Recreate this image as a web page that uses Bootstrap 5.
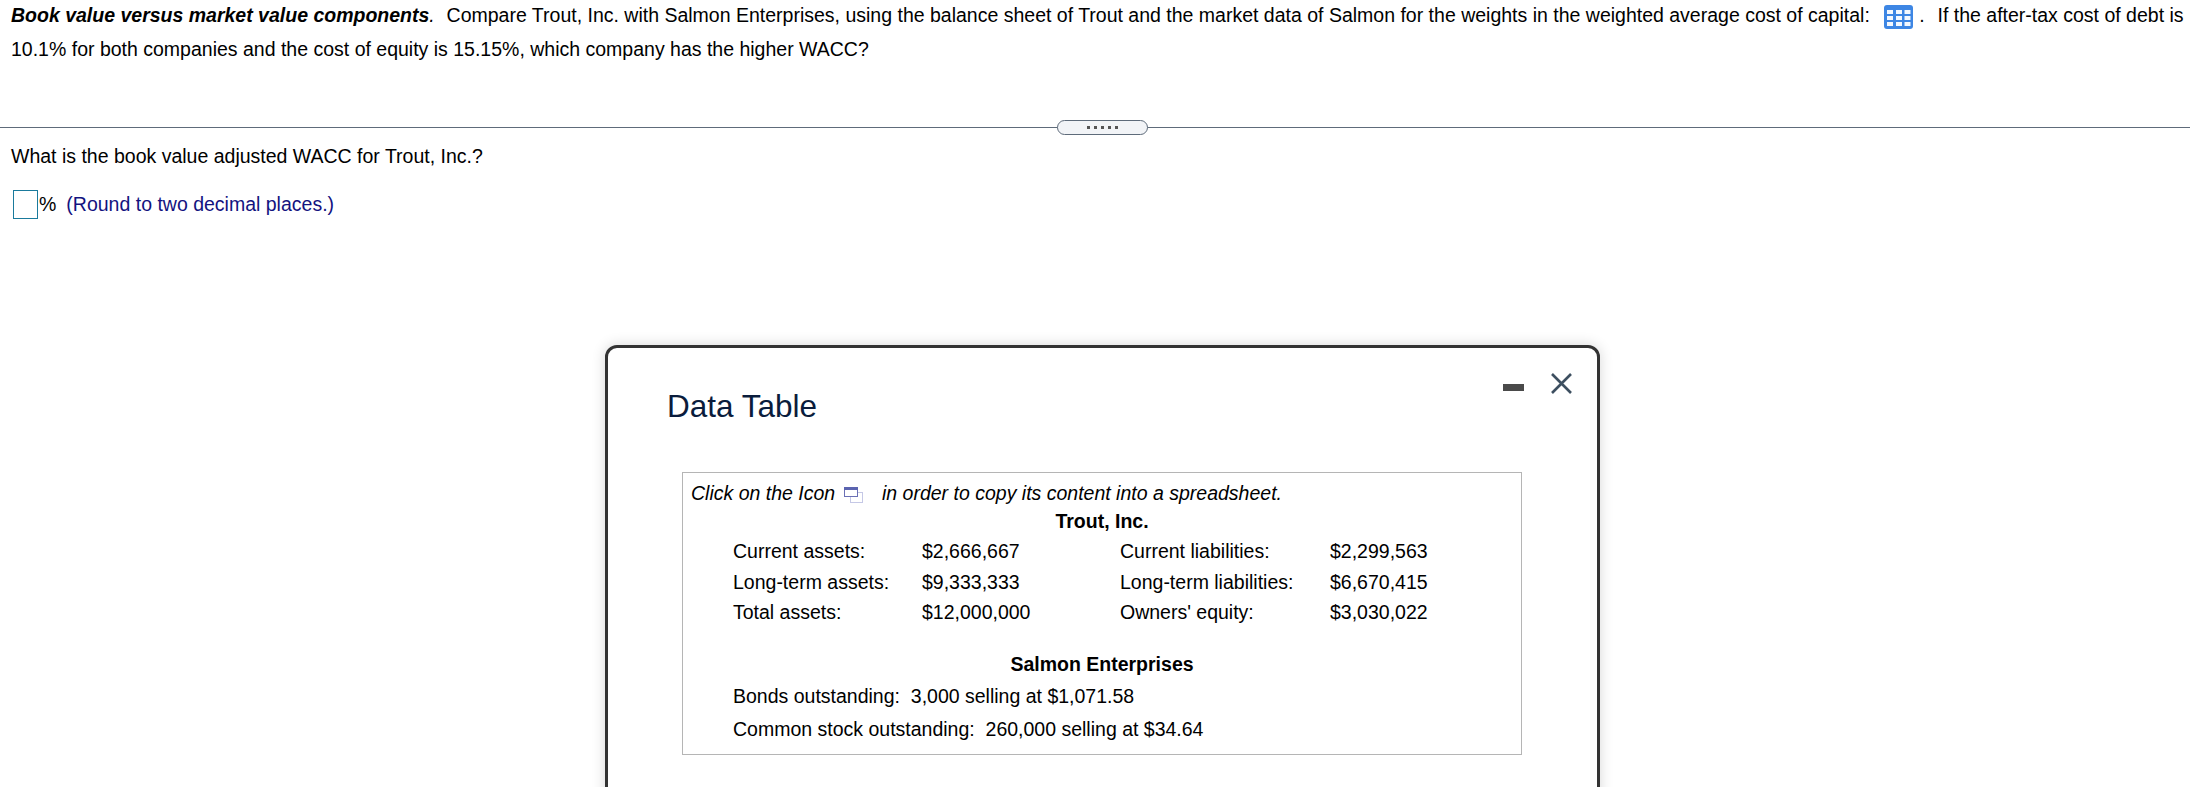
<!DOCTYPE html>
<html lang="en">

<head>
    <meta charset="UTF-8" />
    <title>Data Table</title>
    <link href="https://cdn.jsdelivr.net/npm/bootstrap@5.3.3/dist/css/bootstrap.min.css" rel="stylesheet" />
    <style>
        body {
            width: 2190px;
            height: 787px;
            overflow: hidden;
            position: relative;
            background: #fff;
            color: #000;
            font-family: "Liberation Sans", Arial, sans-serif;
            font-size: 19.5px;
            line-height: 33px;
        }

        .intro-text {
            padding: 0 11px;
            height: 127px;
            margin: -2px 0 0;
            line-height: 34px;
            white-space: nowrap;
        }

        .lead-gap {
            margin-left: 1px;
        }

        .table-icon {
            vertical-align: -7px;
            margin: 0 6px 0 9px;
        }

        .tail-gap {
            margin-left: 2px;
        }

        .split-line {
            height: 1px;
            background: #5e6b7a;
            position: relative;
            margin-top: 2px;
        }

        .split-handle {
            position: absolute;
            left: 1057px;
            top: -7px;
            width: 91px;
            height: 15px;
            background: #f2f4f7;
            border: 1px solid #5e6b7a;
            border-radius: 8px;
            gap: 4px;
        }

        .split-handle i {
            width: 3px;
            height: 3px;
            background: #555;
        }

        .answer-area {
            padding: 12px 11px 0;
        }

        .answer-box {
            width: 25px;
            height: 29px;
            border: 1px solid #1a7a9c;
            margin: 0 1px 0 2px;
        }

        .hint-text {
            color: #13137f;
            margin-left: 10px;
        }

        .answer-row {
            margin-top: 15px;
        }

        .data-window {
            position: absolute;
            left: 605px;
            top: 345px;
            width: 995px;
            height: 480px;
            background: #fff;
            border: 3px solid #333;
            border-radius: 12px;
            box-shadow: 0 0 14px rgba(0, 0, 0, .16);
            padding: 38px 59px 0 59px;
        }

        .window-title {
            font-size: 31.5px;
            line-height: 40px;
            color: #0a1c3c;
            margin: 0 0 46px;
            font-weight: 400;
        }

        .window-btns {
            position: absolute;
            top: 25px;
            right: 25px;
            gap: 27px;
        }

        .min-btn {
            width: 21px;
            height: 7px;
            background: #4a4a4a;
            margin-top: 11px;
        }

        .data-box {
            width: 840px;
            height: 283px;
            margin-left: 15px;
            border: 1px solid #b5b5b5;
            padding: 6px 8px 0;
        }

        .copy-line {
            font-style: italic;
            height: 28px;
            line-height: 28px;
        }

        .copy-icon {
            vertical-align: -3px;
            margin: 0 14px 0 3px;
        }

        .box-heading {
            font-weight: 700;
            text-align: center;
            line-height: 28px;
        }

        .trout-grid {
            margin: 1px 0 0 42px;
        }

        .trout-grid>div {
            height: 30.5px;
            line-height: 30px;
        }

        .cell-a { width: 189px; }
        .cell-b { width: 198px; }
        .cell-c { width: 210px; }

        .salmon-head {
            margin-top: 21px;
            line-height: 30px;
        }

        .salmon-row {
            margin-left: 42px;
            height: 33px;
            line-height: 33px;
        }

        .salmon-first {
            margin-top: 1px;
        }
    </style>
</head>

<body>
    <p class="intro-text"><span class="fw-bold fst-italic">Book value versus market value components</span><i>.</i>&nbsp; <span class="lead-gap">Compare</span> Trout, Inc. with Salmon Enterprises, using the balance sheet of Trout and the market data of Salmon for the weights in the weighted average cost of capital: <svg class="table-icon" width="29" height="24" viewBox="0 0 29 24"><rect width="29" height="24" rx="3" fill="#3d86e4" /><g fill="#f4f8fe"><rect x="3" y="5" width="6" height="4" /><rect x="12" y="5" width="6" height="4" /><rect x="20.5" y="5" width="6" height="4" /><rect x="3" y="11" width="6" height="4" /><rect x="12" y="11" width="6" height="4" /><rect x="20.5" y="11" width="6" height="4" /><rect x="3" y="17" width="6" height="4" /><rect x="12" y="17" width="6" height="4" /><rect x="20.5" y="17" width="6" height="4" /></g></svg>.&nbsp; <span class="tail-gap">If</span> the after-tax cost of debt is<br>10.1% for both companies and the cost of equity is 15.15%, which company has the higher WACC?</p>

    <div class="split-line">
        <div class="split-handle d-flex align-items-center justify-content-center"><i></i><i></i><i></i><i></i><i></i></div>
    </div>

    <div class="answer-area">
        <div>What is the book value adjusted WACC for Trout, Inc.?</div>
        <div class="answer-row d-flex align-items-center">
            <span class="answer-box"></span><span>%</span><span class="hint-text">(Round to two decimal places.)</span>
        </div>
    </div>

    <div class="data-window">
        <div class="window-btns d-flex">
            <span class="min-btn"></span>
            <svg width="21" height="21" viewBox="0 0 21 21"><path d="M1 1 20 20M20 1 1 20" stroke="#3d4f60" stroke-width="2.6" fill="none" /></svg>
        </div>
        <h2 class="window-title">Data Table</h2>
        <div class="data-box">
            <div class="copy-line">Click on the Icon <svg class="copy-icon" width="19" height="16" viewBox="0 0 19 16"><rect x="6.5" y="5.5" width="12" height="10" fill="#fff" stroke="#c5c8e6" /><rect x=".5" y=".5" width="13" height="9" fill="#fff" stroke="#6b70b5" /><rect x="0" y="0" width="14" height="3" fill="#5b64b0" /></svg> in order to copy its content into a spreadsheet.</div>
            <div class="box-heading">Trout, Inc.</div>
            <div class="trout-grid">
                <div class="d-flex"><span class="cell-a">Current assets:</span><span class="cell-b">$2,666,667</span><span class="cell-c">Current liabilities:</span><span>$2,299,563</span></div>
                <div class="d-flex"><span class="cell-a">Long-term assets:</span><span class="cell-b">$9,333,333</span><span class="cell-c">Long-term liabilities:</span><span>$6,670,415</span></div>
                <div class="d-flex"><span class="cell-a">Total assets:</span><span class="cell-b">$12,000,000</span><span class="cell-c">Owners' equity:</span><span>$3,030,022</span></div>
            </div>
            <div class="box-heading salmon-head">Salmon Enterprises</div>
            <div class="salmon-row salmon-first">Bonds outstanding:&nbsp; 3,000 selling at $1,071.58</div>
            <div class="salmon-row">Common stock outstanding:&nbsp; 260,000 selling at $34.64</div>
        </div>
    </div>

    <script src="https://cdn.jsdelivr.net/npm/bootstrap@5.3.3/dist/js/bootstrap.bundle.min.js"></script>
</body>

</html>
